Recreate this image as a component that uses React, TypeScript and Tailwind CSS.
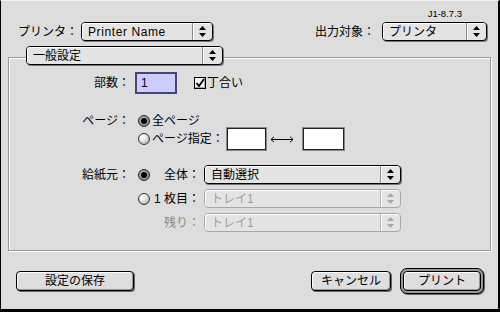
import React from "react";

function Arrows({ disabled }: { disabled?: boolean }) {
  const c = disabled ? "#a6a6a6" : "#000";
  return (
    <svg width="7" height="11" viewBox="0 0 7 11">
      <path d="M3.5 0 L7 4 L0 4 Z" fill={c} />
      <path d="M0 7 L7 7 L3.5 11 Z" fill={c} />
    </svg>
  );
}

function Popup({ label, w, disabled, latin }: { label: string; w: string; disabled?: boolean; latin?: boolean }) {
  return (
    <div
      className={`flex items-stretch h-[19px] rounded-[4px] border bg-[#e4e4e4] shrink-0 ${w} ${
        disabled ? "border-[#a8a8a8] text-[#a0a0a0]" : "border-black text-black shadow-[1px_1px_0_#777]"
      }`}
    >
      <div
        className={`flex-1 flex items-center pl-[6px] leading-[14px] rounded-l-[3px] shadow-[inset_1px_1px_0_#fff] ${
          latin ? "tracking-[0.6px]" : ""
        }`}
      >
        {label}
      </div>
      <div
        className={`w-[20px] flex items-center justify-center border-l rounded-r-[3px] shadow-[inset_1px_1px_0_#fff] ${
          disabled ? "border-[#b4b4b4]" : "border-[#8a8a8a]"
        }`}
      >
        <Arrows disabled={disabled} />
      </div>
    </div>
  );
}

function Radio({ on }: { on?: boolean }) {
  if (on) {
    return (
      <div className="w-[12px] h-[12px] rounded-full border border-[#222] bg-[radial-gradient(circle_at_40%_35%,#bbbbbb_0%,#777777_100%)] flex items-center justify-center shrink-0">
        <div className="w-[6px] h-[6px] rounded-full bg-black" />
      </div>
    );
  }
  return (
    <div className="w-[12px] h-[12px] rounded-full border border-[#333] bg-[radial-gradient(circle_at_35%_30%,#ffffff_0%,#f0f0f0_30%,#9a9a9a_100%)] shrink-0" />
  );
}

function Checkbox() {
  return (
    <div className="w-[12px] h-[12px] border border-black bg-[#f2f2f2] shadow-[inset_-1px_-1px_0_#aaa] shrink-0 flex items-center justify-center">
      <svg width="10" height="10" viewBox="0 0 10 10">
        <path d="M1.5 5 L4 8 L9 1" stroke="#000" strokeWidth="1.7" fill="none" />
      </svg>
    </div>
  );
}

function Btn({ children, w }: { children: React.ReactNode; w: string }) {
  return (
    <div
      className={`${w} h-[20px] rounded-[4px] border border-black bg-[#dedede] shadow-[inset_1px_1px_0_#fff,inset_-1px_-1px_0_#999,1px_1px_0_#666] flex items-center justify-center leading-[14px]`}
    >
      {children}
    </div>
  );
}

function Field({ w }: { w: string }) {
  return (
    <div className={`${w} h-[22px] bg-white border border-[#222] shadow-[0_0_0_1px_#8a8a8a] shrink-0`} />
  );
}

function LongArrow() {
  return (
    <svg width="24" height="7" viewBox="0 0 24 7" className="shrink-0">
      <path d="M1 3.5 H23" stroke="#000" strokeWidth="1" />
      <path d="M4 0.8 L1 3.5 L4 6.2" stroke="#000" strokeWidth="1" fill="none" />
      <path d="M20 0.8 L23 3.5 L20 6.2" stroke="#000" strokeWidth="1" fill="none" />
    </svg>
  );
}

export default function App() {
  return (
    <div className="w-[500px] h-[312px] bg-[#dddddd] border-l border-r-2 border-b-[3px] border-t border-black border-t-[#eeeeee] flex flex-col text-black text-[12px] leading-[14px] font-['Liberation_Sans','Noto_Sans_CJK_JP',sans-serif]">
      <div className="h-[13px] mt-[6px] flex justify-end pr-[36px] text-[9.5px] leading-[13px]">J1-8.7.3</div>

      <div className="mt-[2px] flex items-center justify-between pl-[17px] pr-[11px]">
        <div className="flex items-center">
          <span className="w-[63px]">プリンタ：</span>
          <Popup w="w-[132px]" label="Printer Name" latin />
        </div>
        <div className="flex items-center">
          <span className="w-[67px]">出力対象：</span>
          <Popup w="w-[105px]" label="プリンタ" />
        </div>
      </div>

      <div className="ml-[7px] mt-[16px] w-[483px] h-[194px] border border-[#999] shadow-[inset_1px_1px_0_#fff,1px_1px_0_#fff] flex flex-col">
        <div className="-mt-[12px] ml-[17px] flex">
          <Popup w="w-[197px]" label="一般設定" />
        </div>

        <div className="mt-[7px] flex items-center h-[22px]">
          <span className="w-[121px] text-right">部数：</span>
          <div className="ml-[5px] w-[42px] h-[22px] border-2 border-[#45457a] bg-[#ccccff] flex items-center pl-[4px]">1</div>
          <div className="ml-[17px] flex items-center gap-[1px]">
            <Checkbox />
            <span>丁合い</span>
          </div>
        </div>

        <div className="mt-[20px] flex items-center h-[14px]">
          <span className="w-[121px] text-right">ページ：</span>
          <div className="ml-[8px] flex items-center">
            <Radio on />
          </div>
          <span className="ml-[2px]">全ページ</span>
        </div>

        <div className="flex items-center h-[22px]">
          <div className="ml-[129px] flex items-center">
            <Radio />
          </div>
          <span className="ml-[2px]">ページ指定：</span>
          <div className="ml-[3px] flex items-center">
            <Field w="w-[39px]" />
            <div className="ml-[4px] mr-[9px] flex items-center">
              <LongArrow />
            </div>
            <Field w="w-[41px]" />
          </div>
        </div>

        <div className="mt-[15px] flex items-center h-[19px]">
          <span className="w-[121px] text-right">給紙元：</span>
          <div className="ml-[8px] flex items-center">
            <Radio on />
          </div>
          <span className="w-[50px] text-right">全体：</span>
          <div className="ml-[4px] flex">
            <Popup w="w-[197px]" label="自動選択" />
          </div>
        </div>

        <div className="mt-[5px] flex items-center h-[19px]">
          <div className="ml-[129px] flex items-center">
            <Radio />
          </div>
          <span className="w-[50px] text-right">1 枚目：</span>
          <div className="ml-[4px] flex">
            <Popup w="w-[197px]" label="トレイ1" disabled />
          </div>
        </div>

        <div className="mt-[5px] flex items-center h-[19px]">
          <span className="ml-[141px] w-[50px] text-right text-[#8a8a8a]">残り：</span>
          <div className="ml-[4px] flex">
            <Popup w="w-[197px]" label="トレイ1" disabled />
          </div>
        </div>
      </div>

      <div className="mt-[17px] h-[26px] flex items-center justify-between pl-[15px] pr-[14px]">
        <Btn w="w-[118px]">設定の保存</Btn>
        <div className="flex items-center gap-[9px]">
          <Btn w="w-[80px]">キャンセル</Btn>
          <div className="w-[84px] h-[26px] rounded-[7px] border border-black bg-[#9a9a9a] p-[2px] shadow-[1px_1px_0_#666]">
            <div className="w-full h-full rounded-[4px] border border-black bg-[#dedede] shadow-[inset_1px_1px_0_#fff,inset_-1px_-1px_0_#999] flex items-center justify-center leading-[14px]">
              プリント
            </div>
          </div>
        </div>
      </div>
    </div>
  );
}
